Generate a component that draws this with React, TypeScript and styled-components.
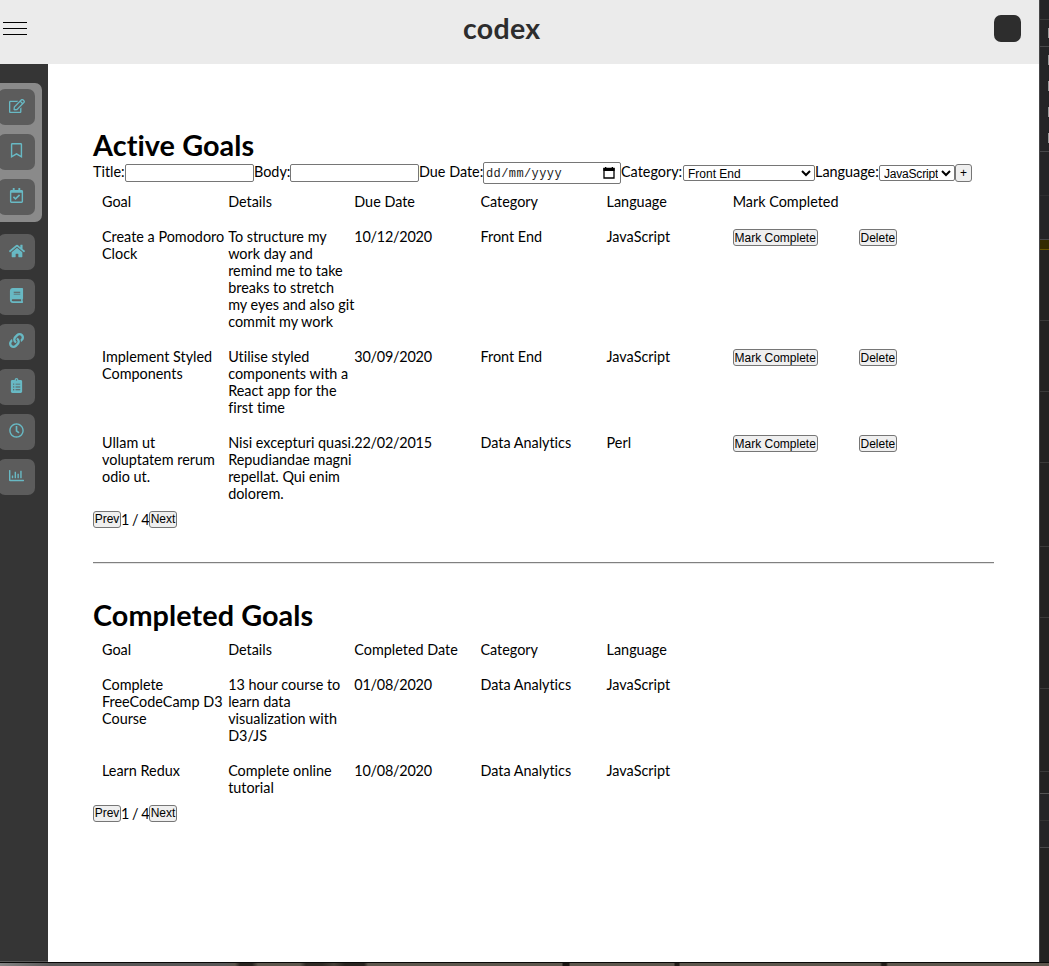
import React from 'react';
import styled, { createGlobalStyle } from 'styled-components';
import {
  FaRegEdit, FaRegBookmark, FaRegCalendarCheck, FaHome, FaBook, FaLink,
  FaClipboardList, FaRegClock, FaRegChartBar,
} from 'react-icons/fa';

const GlobalStyle = createGlobalStyle`
  * { box-sizing: border-box; margin: 0; padding: 0; }
  body { background: #222; overflow: hidden; }
  #root { font: 14.4px/17px Lato, sans-serif; color: #000; font-variant-ligatures: none; }
`;

const Desktop = styled.div`
  width: 1049px; height: 966px; display: flex; flex-direction: column;
`;
const Windows = styled.div`display: flex; height: 962px;`;
const Page = styled.div`width: 1039px; display: flex; flex-direction: column; background: #fff;`;

const Header = styled.header`
  height: 64px; flex: none; background: #ebebeb;
  display: grid; grid-template-columns: 460px auto 1fr; align-items: center;
  padding: 0 18px 0 3px;
`;
const MenuButton = styled.div`
  width: 24px; height: 13px; margin-bottom: 7px;
  display: flex; flex-direction: column; justify-content: space-between;
`;
const MenuLine = styled.span`height: 1px; background: #000;`;
const Logo = styled.div`
  font-size: 28.5px; line-height: 34px; font-weight: 700; letter-spacing: 0.3px;
  color: #2d2d2d; margin-bottom: 9px;
`;
const Avatar = styled.div`
  width: 27px; height: 27px; border-radius: 7px; background: #2d2d2d;
  justify-self: end; margin-bottom: 7px;
`;

const Body = styled.div`display: flex; flex: 1; min-height: 0;`;
const Sidebar = styled.nav`
  width: 48px; flex: none; background: #353535; padding-top: 19px;
  border-bottom: 1px solid #5a5a5a;
`;
const ToolGroup = styled.div<{ $raised?: boolean }>`
  width: 42px; display: flex; flex-direction: column; gap: 9px;
  padding: ${p => (p.$raised ? '6px 0' : '12px 0')};
  height: ${p => (p.$raised ? '139px' : 'auto')};
  border-radius: 0 7px 7px 0;
  background: ${p => (p.$raised ? '#8a8a8a' : 'transparent')};
`;
const Tool = styled.div`
  width: 37px; height: 36px; margin-left: -2px; padding: 0 0 3px 0;
  border-radius: 7px; background: #5c5c5c; color: #68b9c4;
  display: flex; align-items: center; justify-content: center; font-size: 15px;
`;

const Main = styled.main`flex: 1; padding: 64px 45px 0;`;
const Title = styled.h1`font-size: 28.8px; line-height: 34px; font-weight: 700; letter-spacing: 0.07px;`;
const Form = styled.form`display: flex; align-items: center; height: 22px; white-space: nowrap;`;
const Label = styled.label<{ $w: number }>`width: ${p => p.$w}px; flex: none; margin-bottom: 4px;`;
const Input = styled.input<{ $w: number }>`
  width: ${p => p.$w}px; height: 18px; border: 1px solid #767676; border-radius: 2px;
  flex: none;
`;
const DateField = styled.div`
  width: 138px; height: 22px; flex: none; border: 1px solid #767676; border-radius: 2px;
  display: flex; align-items: center; justify-content: space-between;
  padding: 0 5px 0 2px; font: 12px/16px "Liberation Mono", monospace; color: #222;
`;
const DateText = styled.span`letter-spacing: 0.4px; padding-top: 2px;`;
const Select = styled.select<{ $w: number }>`
  width: ${p => p.$w}px; height: 16px; flex: none; border: 1px solid #767676;
  border-radius: 2px; background: #fff; color: #000;
  font: 12px/14px "Liberation Sans", sans-serif;
  letter-spacing: ${p => (p.$w < 100 ? '-0.2px' : '0')};
  padding-left: 0;
`;
const Button = styled.button<{ $w: number; $h?: number }>`
  width: ${p => p.$w}px; height: ${p => p.$h || 17}px; border: 1px solid #767676; border-radius: 3px;
  background: #efefef; color: #000; white-space: nowrap; flex: none;
  display: flex; align-items: center; justify-content: center;
  font: 12px/15px "Liberation Sans", sans-serif;
`;
const Row = styled.div`
  display: grid; grid-template-columns: repeat(7, 1fr); padding: 9px; white-space: pre;
  & > span { min-width: 0; }
  & > ${Button} { margin-top: 1px; padding-top: 2px; }
`;
const DateCell = styled.span`letter-spacing: -0.22px;`;
const Pager = styled.div`display: flex; align-items: center; height: 17px;`;
const PageCount = styled.span`width: 28px; white-space: nowrap; letter-spacing: -0.5px;`;
const Divider = styled.hr`
  height: 2px; border: solid; border-width: 1px 0; border-color: #808080 transparent #e4e4e4;
  margin: 34px 0;
`;

const Inspector = styled.aside`flex: 1; border-left: 1px solid #454547; background: #222; overflow: hidden;`;
const Panel = styled.div<{ $h: number; $bg?: string; $line?: string }>`
  height: ${p => p.$h}px; background: ${p => p.$bg || '#222'};
  border-bottom: 1px solid ${p => p.$line || '#3a3a3a'};
  display: flex; flex-direction: column; align-items: flex-end; justify-content: center;
`;
const Tabs = styled.div`
  height: 105px; background: #242426; border-bottom: 1px solid #48484a;
  display: flex; flex-direction: column; align-items: flex-end; gap: 16px; padding-top: 8px;
`;
const Tick = styled.span`width: 1px; height: 10px; background: #999;`;
const Wallpaper = styled.div`
  height: 4px; border-top: 1px solid #080808;
  background:
    linear-gradient(90deg, transparent 235px, #28231f 240px 252px, #5d564d 258px 300px, #302a25 306px 322px, #48413a 334px, #28231f 345px 364px, transparent 368px 562px, #191512 563px 569px, transparent 570px 674px, #211c18 675px 679px, transparent 680px 880px, #211c18 882px 886px, transparent 888px),
    linear-gradient(90deg, #858585, #595858 50px 225px, #5d564d 235px);
`;

interface Goal { title: string; details: string; date: string; category: string; language: string; }

const activeGoals: Goal[] = [
  { title: 'Create a Pomodoro\nClock', details: 'To structure my\nwork day and\nremind me to take\nbreaks to stretch\nmy eyes and also git\ncommit my work', date: '10/12/2020', category: 'Front End', language: 'JavaScript' },
  { title: 'Implement Styled\nComponents', details: 'Utilise styled\ncomponents with a\nReact app for the\nfirst time', date: '30/09/2020', category: 'Front End', language: 'JavaScript' },
  { title: 'Ullam ut\nvoluptatem rerum\nodio ut.', details: 'Nisi excepturi quasi.\nRepudiandae magni\nrepellat. Qui enim\ndolorem.', date: '22/02/2015', category: 'Data Analytics', language: 'Perl' },
];
const completedGoals: Goal[] = [
  { title: 'Complete\nFreeCodeCamp D3\nCourse', details: '13 hour course to\nlearn data\nvisualization with\nD3/JS', date: '01/08/2020', category: 'Data Analytics', language: 'JavaScript' },
  { title: 'Learn Redux', details: 'Complete online\ntutorial', date: '10/08/2020', category: 'Data Analytics', language: 'JavaScript' },
];

function GoalRow({ goal, active }: { goal: Goal; active?: boolean }) {
  return (
    <Row>
      <span>{goal.title}</span><span>{goal.details}</span><DateCell>{goal.date}</DateCell>
      <span>{goal.category}</span><span>{goal.language}</span>
      {active && <Button $w={85}>Mark Complete</Button>}
      {active && <Button $w={38}>Delete</Button>}
    </Row>
  );
}

function Pagination() {
  return <Pager><Button $w={28}>Prev</Button><PageCount>1 / 4</PageCount><Button $w={28}>Next</Button></Pager>;
}

export default function App() {
  return (
    <Desktop>
      <GlobalStyle />
      <Windows>
        <Page>
          <Header>
            <MenuButton><MenuLine /><MenuLine /><MenuLine /></MenuButton>
            <Logo>codex</Logo>
            <Avatar />
          </Header>
          <Body>
            <Sidebar>
              <ToolGroup $raised>
                <Tool><FaRegEdit size={16} /></Tool>
                <Tool><FaRegBookmark /></Tool>
                <Tool><FaRegCalendarCheck /></Tool>
              </ToolGroup>
              <ToolGroup>
                <Tool><FaHome size={16} /></Tool>
                <Tool><FaBook /></Tool>
                <Tool><FaLink /></Tool>
                <Tool><FaClipboardList /></Tool>
                <Tool><FaRegClock /></Tool>
                <Tool><FaRegChartBar /></Tool>
              </ToolGroup>
            </Sidebar>
            <Main>
              <Title>Active Goals</Title>
              <Form>
                <Label $w={32}>Title:</Label><Input $w={129} />
                <Label $w={36}>Body:</Label><Input $w={129} />
                <Label $w={64}>Due Date:</Label>
                <DateField>
                  <DateText>dd/mm/yyyy</DateText>
                  <svg width="12" height="12" viewBox="0 0 12 12">
                    <path d="M1 1.5h10v9.5H1z" fill="none" stroke="#000" strokeWidth="1.3" />
                    <path d="M.4 1h11.2v3H.4zM2 0h1.3v2H2zM8.7 0H10v2H8.7z" />
                  </svg>
                </DateField>
                <Label $w={62}>Category:</Label>
                <Select $w={132}><option>Front End</option></Select>
                <Label $w={64}>Language:</Label>
                <Select $w={76}><option>JavaScript</option></Select>
                <Button $w={17} $h={18} type="button">+</Button>
              </Form>
              <Row><span>Goal</span><span>Details</span><span>Due Date</span><span>Category</span><span>Language</span><span>Mark Completed</span></Row>
              {activeGoals.map(g => <GoalRow key={g.title} goal={g} active />)}
              <Pagination />
              <Divider />
              <Title>Completed Goals</Title>
              <Row><span>Goal</span><span>Details</span><span>Completed Date</span><span>Category</span><span>Language</span></Row>
              {completedGoals.map(g => <GoalRow key={g.title} goal={g} />)}
              <Pagination />
            </Main>
          </Body>
        </Page>
        <Inspector>
          <Panel $h={20} $bg="#242426" />
          <Panel $h={27} $bg="#242426" $line="#48484a"><Tick /></Panel>
          <Tabs><Tick /><Tick /><Tick /><Tick /></Tabs>
          <Panel $h={44} $bg="#242426" $line="#2e2e30" />
          <Panel $h={44} $bg="#242426" $line="#48484a" />
          <Panel $h={10} $bg="#332b00" $line="#665500" />
          {[71, 71, 71, 84, 71, 71, 83].map((h, i) => <Panel key={i} $h={h} />)}
          <Panel $h={22} $line="#555" />
          <Panel $h={27} $bg="#242426" $line="#333" />
          <Panel $h={27} $bg="#242426" $line="#48484a" />
        </Inspector>
      </Windows>
      <Wallpaper />
    </Desktop>
  );
}
